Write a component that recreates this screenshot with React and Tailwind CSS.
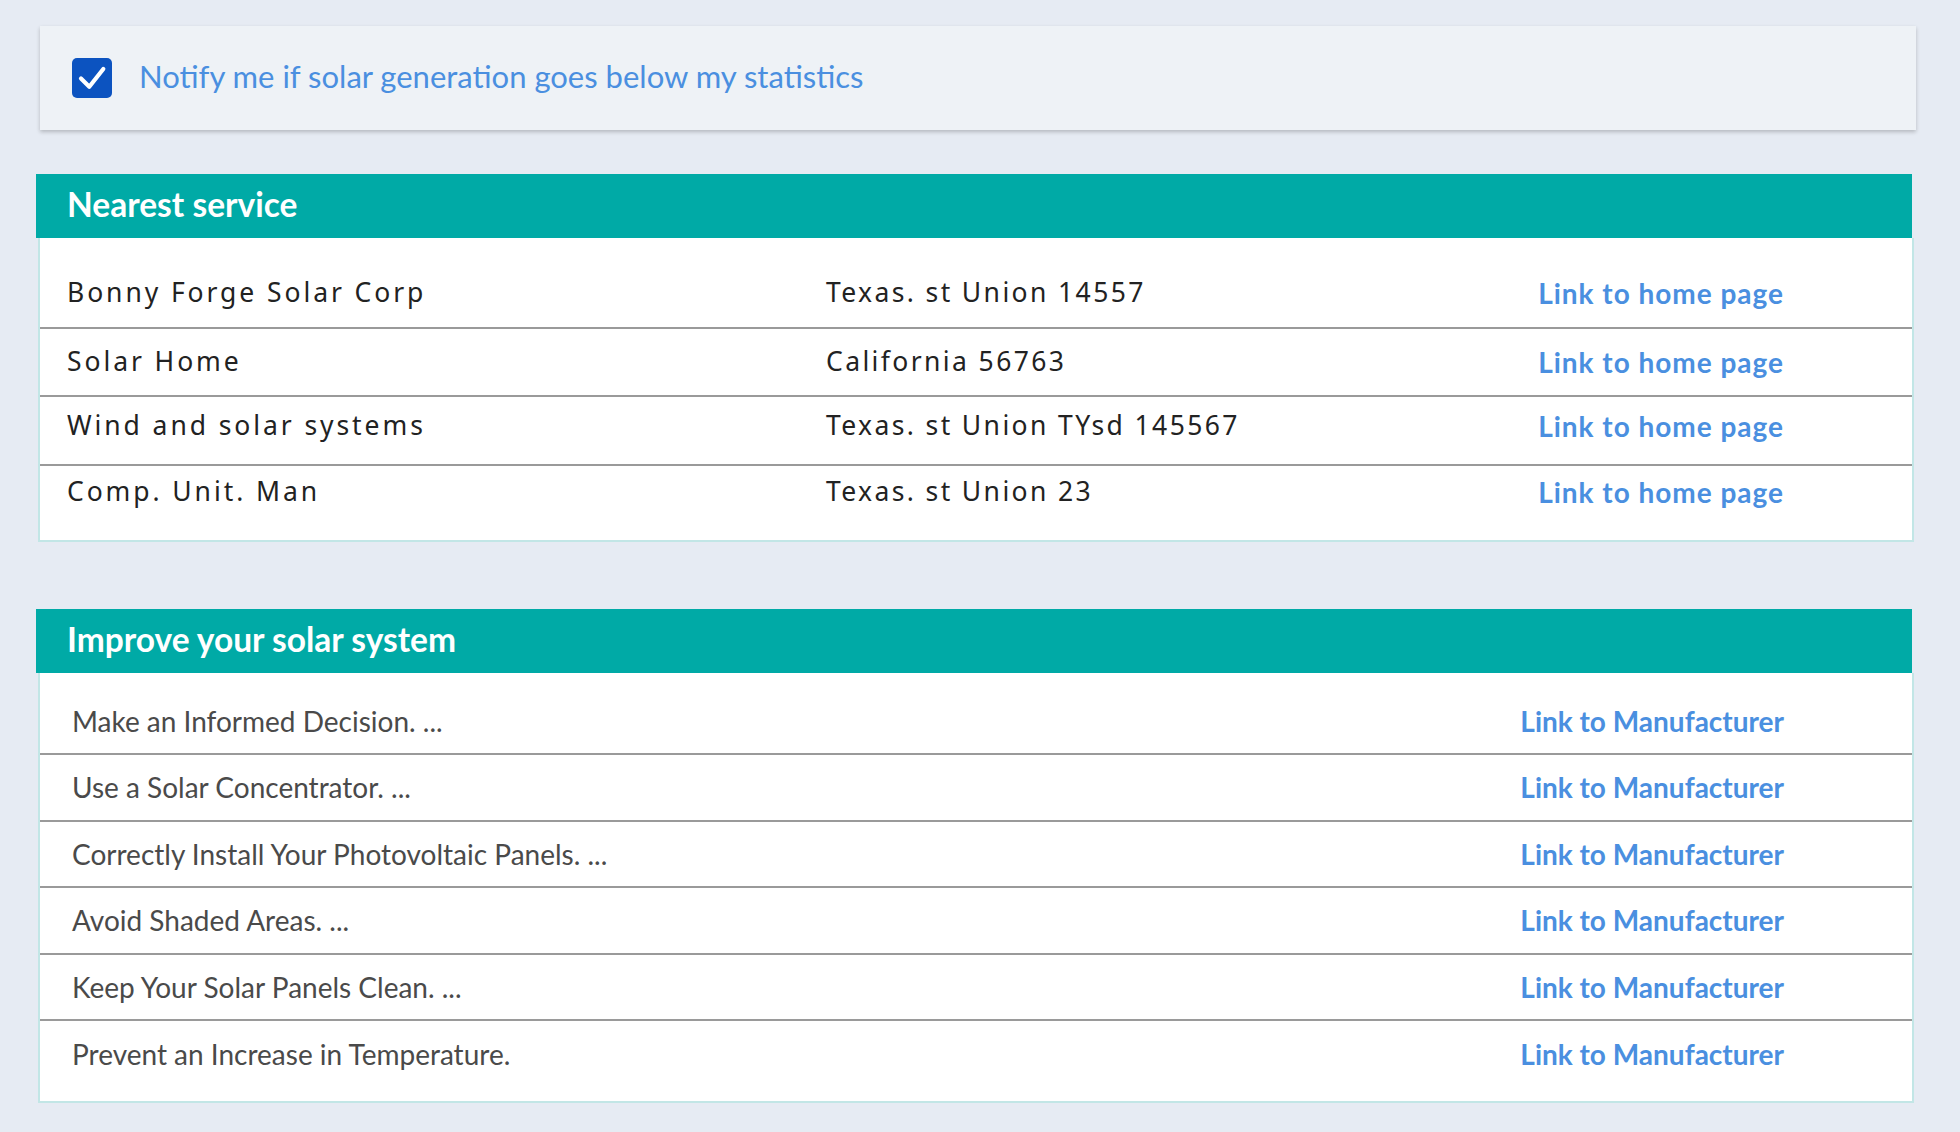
import React from "react";

const services = [
  { name: "Bonny Forge Solar Corp", address: "Texas. st Union 14557" },
  { name: "Solar Home", address: "California 56763" },
  { name: "Wind and solar systems", address: "Texas. st Union TYsd 145567", lift: true },
  { name: "Comp. Unit. Man", address: "Texas. st Union 23" },
];

const tips = [
  "Make an Informed Decision. ...",
  "Use a Solar Concentrator. ...",
  "Correctly Install Your Photovoltaic Panels. ...",
  "Avoid Shaded Areas. ...",
  "Keep Your Solar Panels Clean. ...",
  "Prevent an Increase in Temperature.",
];

const lato = { fontFamily: "Lato, 'Open Sans', sans-serif" };
const gotham = { fontFamily: "'Noto Sans', 'Open Sans', sans-serif" };

const SectionHeader = ({ title }) => (
  <div className="ml-[36px] w-[1876px] h-[64px] bg-[#00aaa6] flex items-center pl-[31px]">
    <h2 className="text-white text-[33.5px] font-bold leading-none pb-[2px]" style={lato}>
      {title}
    </h2>
  </div>
);

const App = () => {
  return (
    <div className="min-h-screen bg-[#e6ebf3] pt-[26px] pb-[31px]">
      {/* Notify card */}
      <div className="ml-[40px] w-[1876px] h-[104px] bg-[#eef2f6] shadow-[0_2px_4px_rgba(0,0,0,0.22)] flex items-center pl-[32px] gap-[27px]">
        <div className="w-[40px] h-[40px] rounded-[5px] bg-[#0c53c0] flex items-center justify-center">
          <svg width="40" height="40" viewBox="0 0 40 40" fill="none">
            <path
              d="M9 20.5l8.3 8.2L31.3 11"
              stroke="white"
              strokeWidth="4.2"
              strokeLinecap="round"
              strokeLinejoin="round"
            />
          </svg>
        </div>
        <span className="text-[31px] text-[#4a8fe0] leading-none pb-[4px]" style={lato}>
          Notify me if solar generation goes below my statistics
        </span>
      </div>

      {/* Nearest service */}
      <div className="mt-[44px]">
        <SectionHeader title="Nearest service" />
        <div className="ml-[38px] w-[1876px] bg-white border-2 border-t-0 border-[#c2e6e6] pt-[22px] pb-[22px]">
          {services.map((s, i) => {
            const last = i === services.length - 1;
            return (
              <div
                key={s.name}
                className={`flex items-center ${
                  last ? "h-[52px]" : "h-[68.5px] border-b-2 border-[#9a9a9a]"
                } ${s.lift ? "pb-[9px]" : ""}`}
              >
                <span
                  className="w-[786px] pl-[27px] text-[26.5px] text-[#222] tracking-[0.11em]"
                  style={gotham}
                >
                  {s.name}
                </span>
                <span
                  className="flex-1 text-[26.5px] text-[#222] tracking-[0.09em]"
                  style={gotham}
                >
                  {s.address}
                </span>
                <a
                  href="#"
                  className="pr-[128px] text-[28px] font-bold text-[#4a8fe0] tracking-[0.035em]"
                  style={lato}
                >
                  Link to home page
                </a>
              </div>
            );
          })}
        </div>
      </div>

      {/* Improve your solar system */}
      <div className="mt-[67px]">
        <SectionHeader title="Improve your solar system" />
        <div className="ml-[38px] w-[1876px] bg-white border-2 border-t-0 border-[#c2e6e6] pt-[16px] pb-[13px]">
          {tips.map((t, i) => (
            <div
              key={t}
              className={`h-[66.5px] flex items-center justify-between ${
                i < tips.length - 1 ? "border-b-2 border-[#9a9a9a]" : ""
              }`}
            >
              <span className="pl-[32px] text-[28px] text-[#4a4a4a]" style={lato}>
                {t}
              </span>
              <a
                href="#"
                className="pr-[128px] text-[28px] font-bold text-[#4a8fe0]"
                style={lato}
              >
                Link to Manufacturer
              </a>
            </div>
          ))}
        </div>
      </div>
    </div>
  );
};

export default App;
